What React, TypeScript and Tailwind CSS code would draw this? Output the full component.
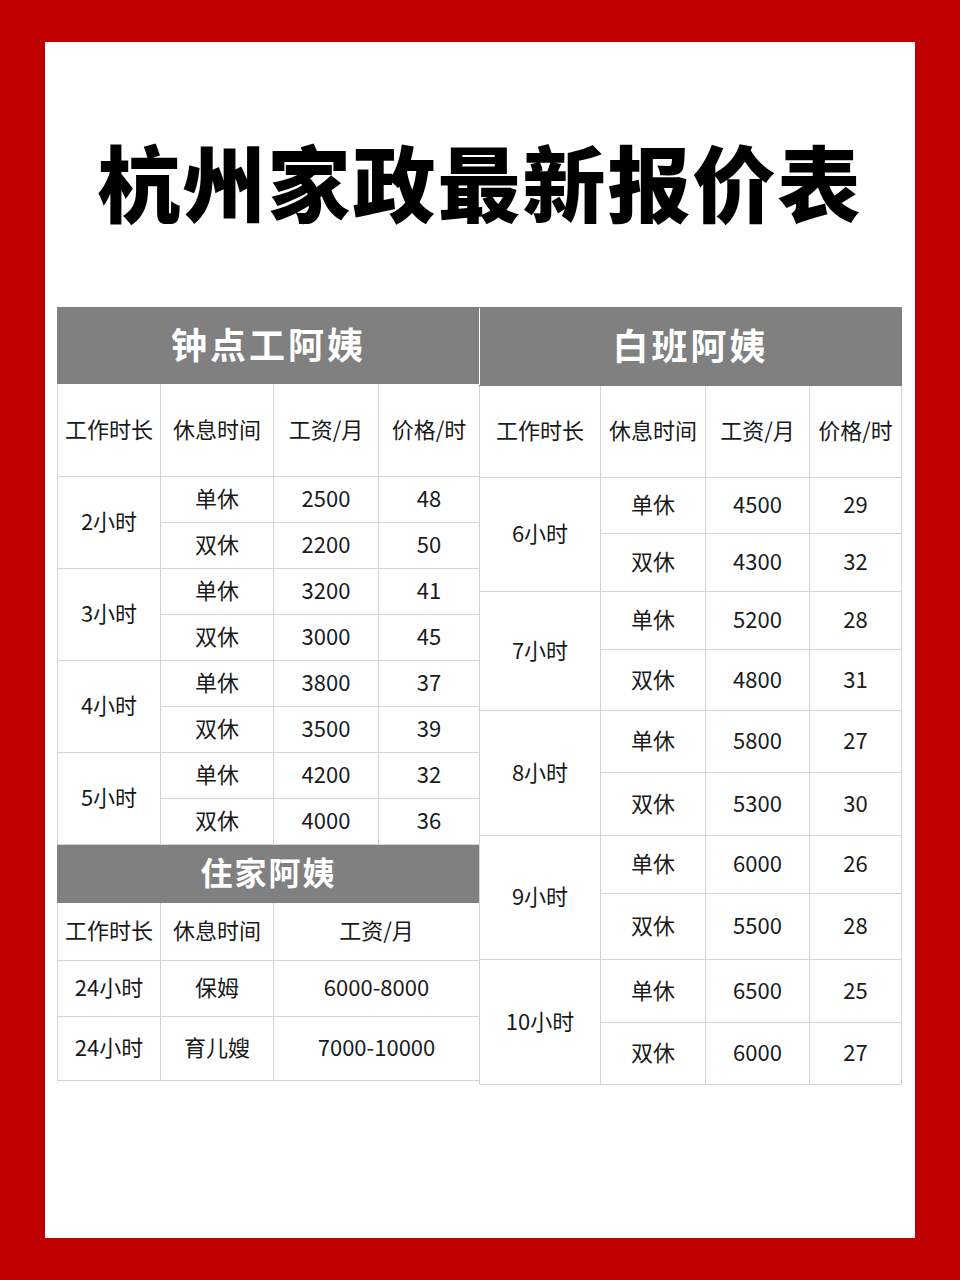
import React from "react";

// 杭州家政报价表：钟点工 / 住家 / 白班 三张表
const font = { fontFamily: '"Noto Sans CJK SC", "Noto Sans", sans-serif' };

const hourly = [
  { hours: "2小时", rows: [["单休", "2500", "48"], ["双休", "2200", "50"]] },
  { hours: "3小时", rows: [["单休", "3200", "41"], ["双休", "3000", "45"]] },
  { hours: "4小时", rows: [["单休", "3800", "37"], ["双休", "3500", "39"]] },
  { hours: "5小时", rows: [["单休", "4200", "32"], ["双休", "4000", "36"]] },
];

const daytime = [
  { hours: "6小时", h: ["h-[56px]", "h-[58px]"], rows: [["单休", "4500", "29"], ["双休", "4300", "32"]] },
  { hours: "7小时", h: ["h-[58px]", "h-[61px]"], rows: [["单休", "5200", "28"], ["双休", "4800", "31"]] },
  { hours: "8小时", h: ["h-[62px]", "h-[63px]"], rows: [["单休", "5800", "27"], ["双休", "5300", "30"]] },
  { hours: "9小时", h: ["h-[58px]", "h-[66px]"], rows: [["单休", "6000", "26"], ["双休", "5500", "28"]] },
  { hours: "10小时", h: ["h-[63px]", "h-[62px]"], rows: [["单休", "6500", "25"], ["双休", "6000", "27"]] },
];

const cell = "border border-[#d4d4d4] text-center align-middle px-0 pt-0 pb-[5px] text-[22px] leading-none text-[#1a1a1a]";
const head = "bg-[#808080] border border-[#808080] text-center align-middle px-0 pt-0 pb-[5px] font-bold text-white leading-none";

function ColHeader({ pay }: { pay: boolean }) {
  return (
    <>
      <td className={cell}>工作时长</td>
      <td className={cell}>休息时间</td>
      <td className={cell} colSpan={pay ? 1 : 2}>工资/月</td>
      {pay && <td className={cell}>价格/时</td>}
    </>
  );
}

export default function App() {
  return (
    <div className="bg-[#c00000] px-[45px] py-[42px] w-[960px] h-[1280px]" style={font}>
      <div className="bg-white h-full flex flex-col">
        <div className="h-[265px] pt-[12px] flex items-center justify-center">
          <h1 className="text-[83px] font-black tracking-[2px] text-black leading-none">杭州家政最新报价表</h1>
        </div>

        <div className="flex items-start pl-[12px]">
          {/* 左侧：钟点工 + 住家 */}
          <table className="w-[422px] table-fixed border-collapse">
            <colgroup>
              <col className="w-[103px]" />
              <col className="w-[113px]" />
              <col className="w-[105px]" />
              <col className="w-[101px]" />
            </colgroup>
            <tbody>
              <tr className="h-[76px]">
                <td colSpan={4} className={`${head} text-[36px] tracking-[3px]`}>钟点工阿姨</td>
              </tr>
              <tr className="h-[93px]">
                <ColHeader pay />
              </tr>
              {hourly.map((g) =>
                g.rows.map((r, i) => (
                  <tr key={g.hours + i} className="h-[46px]">
                    {i === 0 && (
                      <td rowSpan={2} className={cell}>{g.hours}</td>
                    )}
                    <td className={cell}>{r[0]}</td>
                    <td className={cell}>{r[1]}</td>
                    <td className={cell}>{r[2]}</td>
                  </tr>
                ))
              )}
              <tr className="h-[58px]">
                <td colSpan={4} className={`${head} text-[32px] tracking-[2px]`}>住家阿姨</td>
              </tr>
              <tr className="h-[58px]">
                <ColHeader pay={false} />
              </tr>
              <tr className="h-[56px]">
                <td className={cell}>24小时</td>
                <td className={cell}>保姆</td>
                <td className={cell} colSpan={2}>6000-8000</td>
              </tr>
              <tr className="h-[64px]">
                <td className={cell}>24小时</td>
                <td className={cell}>育儿嫂</td>
                <td className={cell} colSpan={2}>7000-10000</td>
              </tr>
            </tbody>
          </table>

          {/* 右侧：白班 */}
          <table className="w-[422px] -ml-px table-fixed border-collapse">
            <colgroup>
              <col className="w-[121px]" />
              <col className="w-[105px]" />
              <col className="w-[104px]" />
              <col className="w-[92px]" />
            </colgroup>
            <tbody>
              <tr className="h-[78px]">
                <td colSpan={4} className={`${head} text-[36px] tracking-[3px] border-l-white`}>白班阿姨</td>
              </tr>
              <tr className="h-[92px]">
                <ColHeader pay />
              </tr>
              {daytime.map((g) =>
                g.rows.map((r, i) => (
                  <tr key={g.hours + i} className={g.h[i]}>
                    {i === 0 && (
                      <td rowSpan={2} className={cell}>{g.hours}</td>
                    )}
                    <td className={cell}>{r[0]}</td>
                    <td className={cell}>{r[1]}</td>
                    <td className={cell}>{r[2]}</td>
                  </tr>
                ))
              )}
            </tbody>
          </table>
        </div>
      </div>
    </div>
  );
}
